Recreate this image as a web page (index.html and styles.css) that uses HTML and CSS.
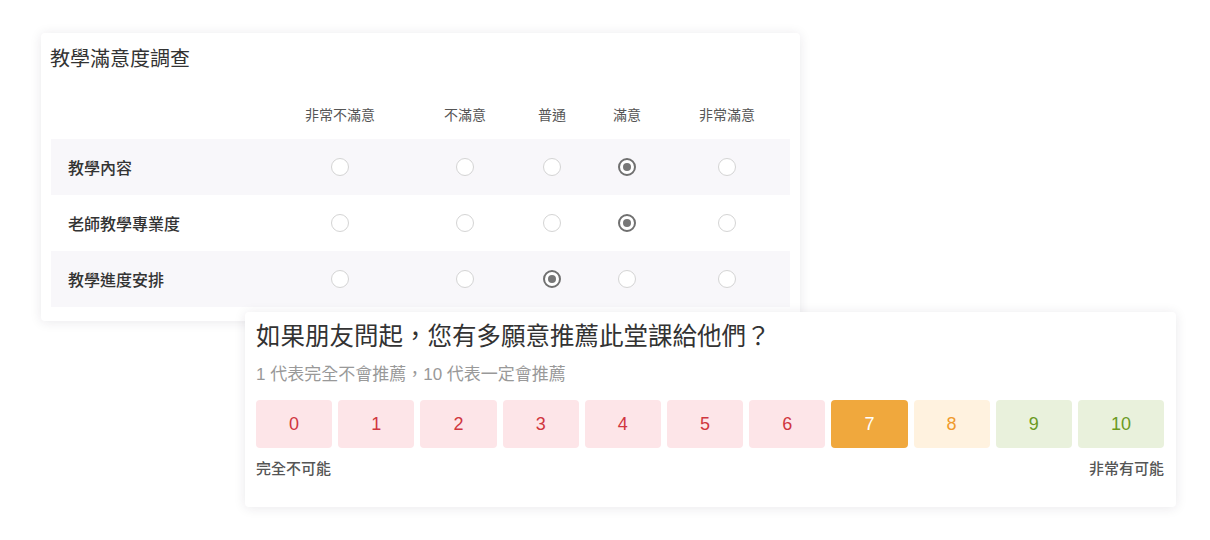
FILE: index.html
```html
<!DOCTYPE html>
<html lang="zh-Hant">
<head>
  <meta charset="utf-8">
  <title>教學滿意度調查</title>
  <link rel="stylesheet" href="styles.css">
</head>
<body>
<div class="stage">
  <div class="card matrix">
    <h2 class="matrix__title">教學滿意度調查</h2>
    <div class="matrix__grid">
      <div class="matrix__head"></div>
      <div class="matrix__head">非常不滿意</div>
      <div class="matrix__head">不滿意</div>
      <div class="matrix__head">普通</div>
      <div class="matrix__head">滿意</div>
      <div class="matrix__head">非常滿意</div>

      <div class="matrix__row matrix__row_alt">
        <div class="matrix__label">教學內容</div>
        <div class="matrix__cell"><span class="radio"></span></div>
        <div class="matrix__cell"><span class="radio"></span></div>
        <div class="matrix__cell"><span class="radio"></span></div>
        <div class="matrix__cell"><span class="radio radio_on"></span></div>
        <div class="matrix__cell"><span class="radio"></span></div>
      </div>
      <div class="matrix__row">
        <div class="matrix__label">老師教學專業度</div>
        <div class="matrix__cell"><span class="radio"></span></div>
        <div class="matrix__cell"><span class="radio"></span></div>
        <div class="matrix__cell"><span class="radio"></span></div>
        <div class="matrix__cell"><span class="radio radio_on"></span></div>
        <div class="matrix__cell"><span class="radio"></span></div>
      </div>
      <div class="matrix__row matrix__row_alt">
        <div class="matrix__label">教學進度安排</div>
        <div class="matrix__cell"><span class="radio"></span></div>
        <div class="matrix__cell"><span class="radio"></span></div>
        <div class="matrix__cell"><span class="radio radio_on"></span></div>
        <div class="matrix__cell"><span class="radio"></span></div>
        <div class="matrix__cell"><span class="radio"></span></div>
      </div>
    </div>
  </div>

  <div class="card nps">
    <h2 class="nps__title">如果朋友問起，您有多願意推薦此堂課給他們？</h2>
    <p class="nps__hint">1 代表完全不會推薦，10 代表一定會推薦</p>
    <div class="nps__scale">
      <span class="nps__btn nps__btn_red">0</span>
      <span class="nps__btn nps__btn_red">1</span>
      <span class="nps__btn nps__btn_red">2</span>
      <span class="nps__btn nps__btn_red">3</span>
      <span class="nps__btn nps__btn_red">4</span>
      <span class="nps__btn nps__btn_red">5</span>
      <span class="nps__btn nps__btn_red">6</span>
      <span class="nps__btn nps__btn_active">7</span>
      <span class="nps__btn nps__btn_orange">8</span>
      <span class="nps__btn nps__btn_green">9</span>
      <span class="nps__btn nps__btn_green">10</span>
    </div>
    <div class="nps__ends">
      <span>完全不可能</span>
      <span>非常有可能</span>
    </div>
  </div>
</div>
</body>
</html>
```

FILE: styles.css
```css
html, body {
  margin: 0;
  background: #fff;
}

body {
  font-family: "Liberation Sans", "Noto Sans CJK TC", sans-serif;
  color: #333;
}

.stage {
  width: 1210px;
  height: 540px;
  padding-top: 33px;
  box-sizing: border-box;
}

.card {
  background: #fff;
  border-radius: 4px;
  box-shadow: 0 1px 12px rgba(40, 30, 60, 0.10);
  box-sizing: border-box;
}

/* matrix card */

.matrix {
  position: relative;
  margin-left: 41px;
  width: 759px;
  height: 288px;
  padding: 12px 10px 0 10px;
}

.matrix__title {
  margin: 0 0 0 -1px;
  font-size: 20px;
  font-weight: normal;
  line-height: 28px;
  color: #333;
}

.matrix__grid {
  display: grid;
  grid-template-columns: 213px 152px 98px 76px 74px 126px;
  margin-top: 32px;
}

.matrix__head {
  font-size: 14px;
  color: #555;
  text-align: center;
  line-height: 20px;
  padding-bottom: 14px;
}

.matrix__row {
  display: contents;
}

.matrix__label,
.matrix__cell {
  height: 56px;
  display: flex;
  align-items: center;
}

.matrix__label {
  padding-left: 17px;
  font-size: 16px;
  font-weight: 500;
  color: #333;
}

.matrix__cell {
  justify-content: center;
}

.matrix__row_alt .matrix__label,
.matrix__row_alt .matrix__cell {
  background: #f8f7fa;
}

.radio {
  width: 18px;
  height: 18px;
  border: 1px solid #d4d4d4;
  border-radius: 50%;
  background: #fff;
  box-sizing: border-box;
  position: relative;
}

.radio_on {
  border: 2px solid #707070;
}

.radio_on::after {
  content: "";
  position: absolute;
  left: 3px;
  top: 3px;
  width: 8px;
  height: 8px;
  border-radius: 50%;
  background: #777;
}

/* nps card */

.nps {
  position: relative;
  margin-top: -9px;
  margin-left: 245px;
  width: 931px;
  height: 195px;
  padding: 9px 12px 0 11px;
}

.nps__title {
  margin: 0;
  font-size: 24.5px;
  font-weight: normal;
  line-height: 32px;
  color: #333;
}

.nps__hint {
  margin: 11px 0 0 0;
  font-size: 17px;
  line-height: 22px;
  color: #999;
}

.nps__scale {
  display: flex;
  gap: 6px;
  margin-top: 14px;
}

.nps__btn {
  flex: 1 1 auto;
  height: 48px;
  line-height: 48px;
  text-align: center;
  font-size: 18px;
  border-radius: 4px;
}

.nps__btn_red {
  background: #fde5e8;
  color: #d0363f;
}

.nps__btn_active {
  background: #f0a83d;
  color: #fff;
}

.nps__btn_orange {
  background: #fff2df;
  color: #f09a2c;
}

.nps__btn_green {
  background: #e9f1dc;
  color: #6b9a1f;
}

.nps__ends {
  display: flex;
  justify-content: space-between;
  margin-top: 11px;
  font-size: 15px;
  line-height: 20px;
  font-weight: 500;
  color: #555;
}
```
